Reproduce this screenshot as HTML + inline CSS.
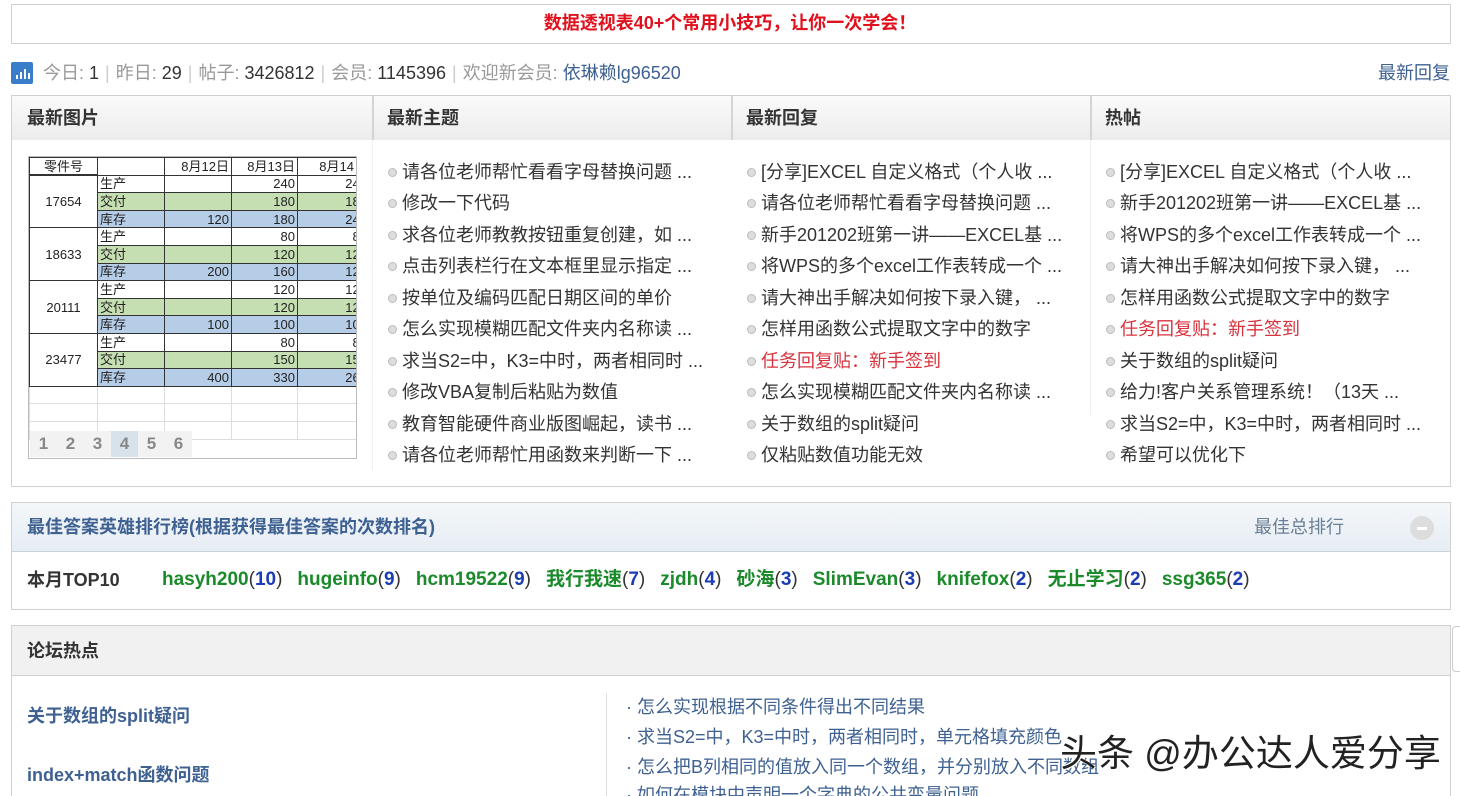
<!DOCTYPE html>
<html><head><meta charset="utf-8">
<style>
*{margin:0;padding:0;box-sizing:border-box}
html,body{width:1460px;height:796px;overflow:hidden}
body{background:#fff;font-family:"Liberation Sans","Noto Sans CJK SC",sans-serif;color:#333;position:relative;line-height:1.15}
.a{position:absolute}
.box{position:absolute;border:1px solid #d0d0d0}
.hd{font-weight:bold;font-size:18px;color:#333}
.li{position:absolute;font-size:18px;color:#333;white-space:nowrap;line-height:20px}
.li::before{content:"";position:absolute;left:-14px;top:6px;width:7px;height:7px;border-radius:50%;background:#ddd;border:1px solid #bbb}
.red{color:#d8323c}
table{border-collapse:collapse;font-size:13px;color:#222}
td{border:1px solid #333;height:17.6px;padding:0 2px;line-height:15px}
.g{background:#c5dfb3}.b{background:#b6cde8}
.top span{margin-right:15px}
.top a{color:#1a8a2a;font-weight:bold}
.top b{color:#1a3db5}
.rl{position:absolute;font-size:18px;color:#3e6192;white-space:nowrap}
.sp{color:#ccc;margin:0 6px}
</style></head><body>
<div class="box" style="left:11px;top:4px;width:1440px;height:40px;"></div>
<div class="a" style="left:0;top:13px;width:1460px;text-align:center;font-size:18px;font-weight:bold;color:#e0101c">数据透视表40+个常用小技巧，让你一次学会！</div>

<svg class="a" style="left:11px;top:62px" width="22" height="22"><rect width="22" height="22" rx="2" fill="#3a7dc9"/><rect x="5" y="13" width="2" height="4" fill="#fff"/><rect x="9" y="10" width="2" height="7" fill="#fff"/><rect x="13" y="7" width="2" height="10" fill="#fff"/><rect x="17" y="11" width="2" height="6" fill="#fff"/></svg>
<div class="a" style="left:43px;top:63px;font-size:18px;color:#999;white-space:nowrap">今日: <span style="color:#333">1</span><span class="sp">|</span>昨日: <span style="color:#333">29</span><span class="sp">|</span>帖子: <span style="color:#333">3426812</span><span class="sp">|</span>会员: <span style="color:#333">1145396</span><span class="sp">|</span>欢迎新会员: <span style="color:#3e6192">依琳赖lg96520</span></div>
<div class="a" style="left:1378px;top:63px;font-size:18px;color:#3e6192">最新回复</div>

<div class="box" style="left:11px;top:95px;width:1440px;height:392px;"></div>
<div class="a" style="left:12px;top:96px;width:1438px;height:44px;background:linear-gradient(#fafafa,#ececec)"></div>
<div class="a" style="left:372px;top:96px;width:2px;height:44px;background:#d4d4d4"></div>
<div class="a" style="left:731px;top:96px;width:2px;height:44px;background:#d4d4d4"></div>
<div class="a" style="left:1090px;top:96px;width:2px;height:44px;background:#d4d4d4"></div>
<div class="a" style="left:372px;top:140px;width:1px;height:330px;background:#f0f0f0"></div>
<div class="a" style="left:1090px;top:140px;width:1px;height:275px;background:#f0f0f0"></div>
<div class="a hd" style="left:27px;top:108px">最新图片</div>
<div class="a hd" style="left:387px;top:108px">最新主题</div>
<div class="a hd" style="left:746px;top:108px">最新回复</div>
<div class="a hd" style="left:1105px;top:108px">热帖</div>

<div class="a" style="left:28px;top:156px;width:329px;height:303px;border:1px solid #bbb;overflow:hidden;background:#fff">
<table style="width:340px;table-layout:fixed">
<colgroup><col style="width:68px"><col style="width:67px"><col style="width:67px"><col style="width:66px"><col style="width:72px"></colgroup>
<tr><td style="text-align:center;border-bottom:2px solid #333">零件号</td><td></td><td style="text-align:right">8月12日</td><td style="text-align:right">8月13日</td><td style="text-align:right">8月14日</td></tr>
<tr><td rowspan="3" style="text-align:center">17654</td><td>生产</td><td></td><td style="text-align:right">240</td><td style="text-align:right">240</td></tr>
<tr class="g"><td>交付</td><td></td><td style="text-align:right">180</td><td style="text-align:right">180</td></tr>
<tr class="b"><td>库存</td><td style="text-align:right">120</td><td style="text-align:right">180</td><td style="text-align:right">240</td></tr>
<tr><td rowspan="3" style="text-align:center">18633</td><td>生产</td><td></td><td style="text-align:right">80</td><td style="text-align:right">80</td></tr>
<tr class="g"><td>交付</td><td></td><td style="text-align:right">120</td><td style="text-align:right">120</td></tr>
<tr class="b"><td>库存</td><td style="text-align:right">200</td><td style="text-align:right">160</td><td style="text-align:right">120</td></tr>
<tr><td rowspan="3" style="text-align:center">20111</td><td>生产</td><td></td><td style="text-align:right">120</td><td style="text-align:right">120</td></tr>
<tr class="g"><td>交付</td><td></td><td style="text-align:right">120</td><td style="text-align:right">120</td></tr>
<tr class="b"><td>库存</td><td style="text-align:right">100</td><td style="text-align:right">100</td><td style="text-align:right">100</td></tr>
<tr><td rowspan="3" style="text-align:center">23477</td><td>生产</td><td></td><td style="text-align:right">80</td><td style="text-align:right">80</td></tr>
<tr class="g"><td>交付</td><td></td><td style="text-align:right">150</td><td style="text-align:right">150</td></tr>
<tr class="b"><td>库存</td><td style="text-align:right">400</td><td style="text-align:right">330</td><td style="text-align:right">260</td></tr>
<tr><td style="border-color:#ddd"></td><td style="border-color:#ddd"></td><td style="border-color:#ddd"></td><td style="border-color:#ddd"></td><td style="border-color:#ddd"></td></tr>
<tr><td style="border-color:#ddd"></td><td style="border-color:#ddd"></td><td style="border-color:#ddd"></td><td style="border-color:#ddd"></td><td style="border-color:#ddd"></td></tr>
<tr><td style="border-color:#ddd"></td><td style="border-color:#ddd"></td><td style="border-color:#ddd"></td><td style="border-color:#ddd"></td><td style="border-color:#ddd"></td></tr>
</table>
<div class="a" style="left:1px;top:274px;display:flex;font-size:17px;font-weight:bold;color:#888">
<span style="width:27px;height:26px;text-align:center;background:#f2f2f2;line-height:26px">1</span><span style="width:27px;text-align:center;background:#f2f2f2;line-height:26px">2</span><span style="width:27px;text-align:center;background:#f2f2f2;line-height:26px">3</span><span style="width:27px;text-align:center;background:#d7e2ea;line-height:26px">4</span><span style="width:27px;text-align:center;background:#f2f2f2;line-height:26px">5</span><span style="width:27px;text-align:center;background:#f2f2f2;line-height:26px">6</span></div>
</div>

<div class="li" style="left:402px;top:162px">请各位老师帮忙看看字母替换问题 ...</div>
<div class="li" style="left:402px;top:193px">修改一下代码</div>
<div class="li" style="left:402px;top:225px">求各位老师教教按钮重复创建，如 ...</div>
<div class="li" style="left:402px;top:256px">点击列表栏行在文本框里显示指定 ...</div>
<div class="li" style="left:402px;top:288px">按单位及编码匹配日期区间的单价</div>
<div class="li" style="left:402px;top:319px">怎么实现模糊匹配文件夹内名称读 ...</div>
<div class="li" style="left:402px;top:351px">求当S2=中，K3=中时，两者相同时 ...</div>
<div class="li" style="left:402px;top:382px">修改VBA复制后粘贴为数值</div>
<div class="li" style="left:402px;top:414px">教育智能硬件商业版图崛起，读书 ...</div>
<div class="li" style="left:402px;top:445px">请各位老师帮忙用函数来判断一下 ...</div>

<div class="li" style="left:761px;top:162px">[分享]EXCEL 自定义格式（个人收 ...</div>
<div class="li" style="left:761px;top:193px">请各位老师帮忙看看字母替换问题 ...</div>
<div class="li" style="left:761px;top:225px">新手201202班第一讲——EXCEL基 ...</div>
<div class="li" style="left:761px;top:256px">将WPS的多个excel工作表转成一个 ...</div>
<div class="li" style="left:761px;top:288px">请大神出手解决如何按下录入键，  ...</div>
<div class="li" style="left:761px;top:319px">怎样用函数公式提取文字中的数字</div>
<div class="li red" style="left:761px;top:351px">任务回复贴：新手签到</div>
<div class="li" style="left:761px;top:382px">怎么实现模糊匹配文件夹内名称读 ...</div>
<div class="li" style="left:761px;top:414px">关于数组的split疑问</div>
<div class="li" style="left:761px;top:445px">仅粘贴数值功能无效</div>

<div class="li" style="left:1120px;top:162px">[分享]EXCEL 自定义格式（个人收 ...</div>
<div class="li" style="left:1120px;top:193px">新手201202班第一讲——EXCEL基 ...</div>
<div class="li" style="left:1120px;top:225px">将WPS的多个excel工作表转成一个 ...</div>
<div class="li" style="left:1120px;top:256px">请大神出手解决如何按下录入键，  ...</div>
<div class="li" style="left:1120px;top:288px">怎样用函数公式提取文字中的数字</div>
<div class="li red" style="left:1120px;top:319px">任务回复贴：新手签到</div>
<div class="li" style="left:1120px;top:351px">关于数组的split疑问</div>
<div class="li" style="left:1120px;top:382px">给力!客户关系管理系统！（13天 ...</div>
<div class="li" style="left:1120px;top:414px">求当S2=中，K3=中时，两者相同时 ...</div>
<div class="li" style="left:1120px;top:445px">希望可以优化下</div>

<div class="box" style="left:11px;top:502px;width:1440px;height:108px;"></div>
<div class="a" style="left:12px;top:503px;width:1438px;height:49px;background:linear-gradient(#f4f7fa,#e6edf3);border-bottom:1px solid #c9d3dc"></div>
<div class="a" style="left:27px;top:517px;font-size:18px;font-weight:bold;color:#3e6192">最佳答案英雄排行榜(根据获得最佳答案的次数排名)</div>
<div class="a" style="left:1254px;top:517px;font-size:18px;color:#6b7f95">最佳总排行</div>
<div class="a" style="left:1410px;top:516px;width:24px;height:24px;border-radius:50%;background:#ddd"><div class="a" style="left:7px;top:11px;width:10px;height:3px;background:#fff"></div></div>
<div class="a" style="left:27px;top:570px;font-size:18px;font-weight:bold;color:#333">本月TOP10</div>
<div class="a top" style="left:162px;top:569px;font-size:19px;white-space:nowrap;color:#333"><span><a>hasyh200</a>(<b>10</b>)</span><span><a>hugeinfo</a>(<b>9</b>)</span><span><a>hcm19522</a>(<b>9</b>)</span><span><a>我行我速</a>(<b>7</b>)</span><span><a>zjdh</a>(<b>4</b>)</span><span><a>砂海</a>(<b>3</b>)</span><span><a>SlimEvan</a>(<b>3</b>)</span><span><a>knifefox</a>(<b>2</b>)</span><span><a>无止学习</a>(<b>2</b>)</span><span><a>ssg365</a>(<b>2</b>)</span></div>

<div class="box" style="left:11px;top:625px;width:1440px;height:180px;"></div>
<div class="a" style="left:12px;top:626px;width:1438px;height:50px;background:#f1f1f1;border-bottom:1px solid #d0d0d0"></div>
<div class="a" style="left:1452px;top:626px;width:8px;height:46px;border:1px solid #ccc;border-right:none;border-radius:4px 0 0 4px"></div>
<div class="a hd" style="left:27px;top:641px">论坛热点</div>
<div class="a" style="left:27px;top:706px;font-size:18px;font-weight:bold;color:#3e6192">关于数组的split疑问</div>
<div class="a" style="left:27px;top:765px;font-size:18px;font-weight:bold;color:#3e6192">index+match函数问题</div>
<div class="a" style="left:606px;top:693px;width:1px;height:103px;background:#e0e0e0"></div>
<div class="rl" style="left:626px;top:697px">· 怎么实现根据不同条件得出不同结果</div>
<div class="rl" style="left:626px;top:727px">· 求当S2=中，K3=中时，两者相同时，单元格填充颜色</div>
<div class="rl" style="left:626px;top:757px">· 怎么把B列相同的值放入同一个数组，并分别放入不同数组</div>
<div class="rl" style="left:626px;top:785px">· 如何在模块中声明一个字典的公共变量问题</div>
<div class="a" style="left:1060px;top:733px;font-size:37px;color:#222;white-space:nowrap;text-shadow:1px 1px 0 #fff,-1px -1px 0 #fff">头条 @办公达人爱分享</div>
</body></html>
